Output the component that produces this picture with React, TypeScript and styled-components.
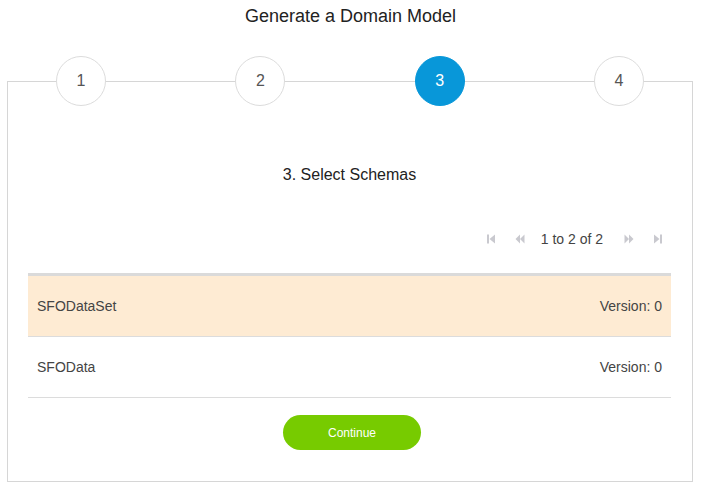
import React from "react";
import styled, { createGlobalStyle } from "styled-components";

const Global = createGlobalStyle`
  html, body { margin: 0; padding: 0; background: #fff; }
  body { font-family: "Liberation Sans", Arial, sans-serif; color: #333; }
`;

const Page = styled.div`
  width: 701px;
  display: flex;
  flex-direction: column;
`;

const Title = styled.h1`
  margin: 6px 0 54px;
  font-size: 18px;
  line-height: 21px;
  font-weight: normal;
  text-align: center;
  color: #222;
`;

const Panel = styled.div`
  margin-left: 7px;
  width: 686px;
  box-sizing: border-box;
  border: 1px solid #d6d6d6;
  padding: 0 21px 31px 20px;
  display: flex;
  flex-direction: column;
`;

const Steps = styled.div`
  margin: -26px 27px 0 28px;
  display: flex;
  justify-content: space-between;
`;

const Step = styled.div<{ $active?: boolean }>`
  width: 50px;
  height: 50px;
  box-sizing: border-box;
  border-radius: 50%;
  border: 1px solid ${(p) => (p.$active ? "#0897d9" : "#dcdcdc")};
  background: ${(p) => (p.$active ? "#0897d9" : "#fff")};
  color: ${(p) => (p.$active ? "#fff" : "#555")};
  display: flex;
  align-items: center;
  justify-content: center;
  font-size: 16px;
`;

const Heading = styled.h2`
  margin: 60px 0 0;
  font-size: 16px;
  line-height: 18px;
  font-weight: normal;
  text-align: center;
  color: #222;
`;

const Pager = styled.div`
  margin: 47px 8px 0 0;
  height: 16px;
  display: flex;
  justify-content: flex-end;
  align-items: center;
  font-size: 14px;
  color: #444;
`;

const PagerButton = styled.span<{ $gap: number }>`
  display: inline-flex;
  width: 10px;
  height: 10px;
  margin-left: ${(p) => p.$gap}px;
  color: #c9c9cf;
`;

const PagerText = styled.span<{ $gap: number }>`
  margin-left: ${(p) => p.$gap}px;
  line-height: 16px;
`;

const Table = styled.div`
  margin-top: 26px;
  border-top: 3px solid #dadada;
  display: flex;
  flex-direction: column;
`;

const Row = styled.div<{ $selected?: boolean }>`
  height: 60px;
  border-bottom: 1px solid #dcdcdc;
  background: ${(p) => (p.$selected ? "#feebd3" : "#fff")};
  display: flex;
  align-items: center;
  justify-content: space-between;
  padding: 0 9px;
  font-size: 14px;
  color: #444;
`;

const Footer = styled.div`
  margin-top: 17px;
  display: flex;
  justify-content: center;
  padding-left: 5px;
`;

const Button = styled.button`
  width: 138px;
  height: 35px;
  border: none;
  border-radius: 18px;
  background: #77cb00;
  color: #fff;
  font-family: "Liberation Sans", Arial, sans-serif;
  font-size: 12px;
  cursor: pointer;
`;

const FirstIcon = () => (
  <svg width="10" height="10" viewBox="0 0 10 10" fill="currentColor">
    <rect x="1" y="0.5" width="2" height="9" />
    <polygon points="9,0.5 9,9.5 3.5,5" />
  </svg>
);
const PrevIcon = () => (
  <svg width="10" height="10" viewBox="0 0 10 10" fill="currentColor">
    <polygon points="5,0.5 5,9.5 0.5,5" />
    <polygon points="9.5,0.5 9.5,9.5 5,5" />
  </svg>
);
const NextIcon = () => (
  <svg width="10" height="10" viewBox="0 0 10 10" fill="currentColor">
    <polygon points="0.5,0.5 0.5,9.5 5,5" />
    <polygon points="5,0.5 5,9.5 9.5,5" />
  </svg>
);
const LastIcon = () => (
  <svg width="10" height="10" viewBox="0 0 10 10" fill="currentColor">
    <polygon points="1,0.5 1,9.5 6.5,5" />
    <rect x="7" y="0.5" width="2" height="9" />
  </svg>
);

const schemas = [
  { name: "SFODataSet", version: 0, selected: true },
  { name: "SFOData", version: 0, selected: false },
];

export default function App() {
  return (
    <Page>
      <Global />
      <Title>Generate a Domain Model</Title>
      <Panel>
        <Steps>
          {[1, 2, 3, 4].map((n) => (
            <Step key={n} $active={n === 3}>
              {n}
            </Step>
          ))}
        </Steps>
        <Heading>3. Select Schemas</Heading>
        <Pager>
          <PagerButton $gap={0}>
            <FirstIcon />
          </PagerButton>
          <PagerButton $gap={19}>
            <PrevIcon />
          </PagerButton>
          <PagerText $gap={16}>1 to 2 of 2</PagerText>
          <PagerButton $gap={21}>
            <NextIcon />
          </PagerButton>
          <PagerButton $gap={19}>
            <LastIcon />
          </PagerButton>
        </Pager>
        <Table>
          {schemas.map((s) => (
            <Row key={s.name} $selected={s.selected}>
              <span>{s.name}</span>
              <span>Version: {s.version}</span>
            </Row>
          ))}
        </Table>
        <Footer>
          <Button>Continue</Button>
        </Footer>
      </Panel>
    </Page>
  );
}
